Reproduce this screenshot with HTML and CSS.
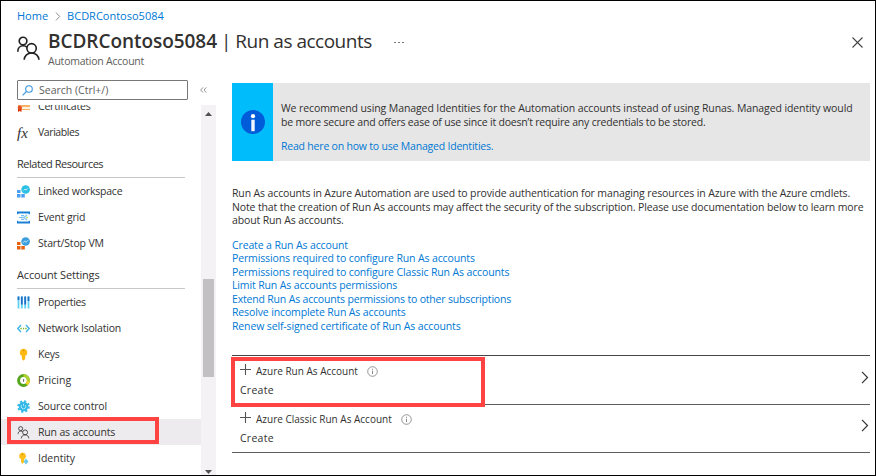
FILE: index.html
```
<!DOCTYPE html>
<html lang="en">
<head>
<meta charset="utf-8">
<title>BCDRContoso5084 | Run as accounts</title>
<link rel="stylesheet" href="styles.css">
</head>
<body>
<svg width="0" height="0" class="defs">
  <symbol id="people" viewBox="0 0 24 26"><g fill="none" stroke="currentColor" stroke-width="1.7"><circle cx="6.3" cy="5.2" r="4"/><path d="M.8 16.5c0-4 2.6-6.4 5.6-6.4 1.700 0 3.200.6 4.200 1.700"/><circle cx="15.200" cy="12.800" r="4.900"/><path d="M7.500 24.800c.2-4.200 3.500-7.100 7.700-7.100s7.500 2.900 7.700 7.100"/></g></symbol>
  <symbol id="chev" viewBox="0 0 8 13"><path d="M1 .8 6.500 6.500 1 12.200" fill="none" stroke="currentColor" stroke-width="1.2"/></symbol>
  <symbol id="plus" viewBox="0 0 11 11"><path d="M5.500 0v11M0 5.500h11" stroke="#555" stroke-width="1.100"/></symbol>
  <symbol id="hint" viewBox="0 0 11 11"><circle cx="5.500" cy="5.500" r="4.800" fill="none" stroke="#8a8a8a" stroke-width=".9"/><path d="M5.500 4.700v3.400M5.500 2.700v1.100" stroke="#8a8a8a"/></symbol>
</svg>
<div class="window">
  <header class="header">
    <nav class="crumbs">
      <a class="home">Home</a>
      <svg class="sep" viewBox="0 0 8 13"><use href="#chev"/></svg>
      <a class="crumb">BCDRContoso5084</a>
    </nav>
    <div class="heading">
      <svg class="logo" viewBox="0 0 24 26"><use href="#people"/></svg>
      <div class="titles">
        <h1 class="title"><b>BCDRContoso5084</b><span>| Run as accounts</span></h1>
        <div class="subtitle">Automation Account</div>
      </div>
      <span class="more"><i></i><i></i><i></i></span>
      <svg class="close" viewBox="0 0 11 11"><path d="M.5.5l10 10M10.500.5l-10 10" stroke="#444" stroke-width="1.100"/></svg>
    </div>
  </header>
  <div class="body">
    <aside class="sidebar">
      <div class="search-row">
        <div class="search">
          <svg viewBox="0 0 11 11"><path d="M.6 10.400 4.300 6.700" stroke="#3a96dd" stroke-width="1.200"/><circle cx="7" cy="4" r="3.300" fill="none" stroke="#3a96dd" stroke-width="1.100"/></svg>
          <span>Search (Ctrl+/)</span>
        </div>
        <svg class="collapse" viewBox="0 0 7 6"><path d="M3 .4.700 3 3 5.600M6.300.4 4 3l2.300 2.600" fill="none" stroke="#777" stroke-width=".8"/></svg>
      </div>
      <div class="menu">
        <div class="list">
          <div class="item"><svg viewBox="0 0 13 13"><path d="M1 3h12v7H4V8H1z" fill="#f7b267"/><path d="M5 7h8v2H5z" fill="#fff3e0"/><path d="M1 7.500h3.500V12L2.700 11 1 12z" fill="#d83b01"/><circle cx="2.700" cy="7.500" r="2" fill="#e8502a"/></svg><span class="t2">Certificates</span></div>
          <div class="item"><span class="fx">fx</span><span class="t4">Variables</span></div>
          <h2 class="group g1">Related Resources</h2>
          <div class="item"><svg viewBox="0 0 13 13"><path d="M0 5h3.500v3H0zM0 9h3.500v3.500H0zM4.300 9h3.500v3.500H4.300z" fill="#4a9ff0"/><circle cx="8.600" cy="4.500" r="4.300" fill="#2bc0e4"/><path d="M6.500 5.500 8 4l1.100 1.200L10.500 3.300" fill="none" stroke="#c4f2fb" stroke-width=".9"/></svg><span class="t2">Linked workspace</span></div>
          <div class="item"><svg viewBox="0 0 13 13"><path d="M0 3V.7h13V3h-1.200V2.200H1.200V3zM0 10v2.300h13V10h-1.200v.8H1.200V10z" fill="#1a7fd4" stroke="#1a7fd4" stroke-width=".4"/><path d="M2 6.500h5M4 4.700h3M4 8.300h3" stroke="#7cbdf0" stroke-width="1.200"/><path d="M10 3.900 6.900 6.500 10 9.100" fill="none" stroke="#8fcdf3" stroke-width="1.500"/><path d="M9.300 6.500h1.500" stroke="#9bd048" stroke-width="1.500"/></svg><span class="t1">Event grid</span></div>
          <div class="item"><svg viewBox="0 0 13 13"><path d="M0 5h3.500v3H0zM0 9h3.500v3.500H0zM4.300 9h3.500v3.500H4.300z" fill="#e8610f"/><circle cx="8.600" cy="4.500" r="4.300" fill="#3c9fdc"/><path d="M6 5.800 7.800 3.800l1.100 1.600L11 3.200" fill="none" stroke="#c9e8fa" stroke-width=".9"/></svg><span class="t1">Start/Stop VM</span></div>
          <h2 class="group g2">Account Settings</h2>
          <div class="item"><svg viewBox="0 0 13 13"><g stroke="#62d0f2" stroke-width="1.800"><path d="M1.500.5v12M4.800.5v12M8.200.5v12M11.500.5v12"/></g><g stroke="#1f6fc9" stroke-width="1.800"><path d="M1.500.5v3.500M4.800.5v8M8.200.5v8M11.500.5v4.500"/></g></svg><span class="t3">Properties</span></div>
          <div class="item"><svg viewBox="0 0 13 13"><path d="M4 3 .8 6.500 4 10M9 3l3.200 3.500L9 10" fill="none" stroke="#43b4e8" stroke-width="1.400"/><path d="M3.400 6.500h1.400M5.900 6.500h1.300M8.300 6.500h1.400" stroke="#78b928" stroke-width="1.400"/></svg><span class="t2">Network Isolation</span></div>
          <div class="item"><svg viewBox="0 0 13 13"><path d="M6.500.8a3.700 3.700 0 0 1 1.700 7v3.300l-1.700 1.600-1.600-1.600V7.800a3.700 3.700 0 0 1 1.600-7z" fill="#fdb913"/><circle cx="6.500" cy="2.600" r=".7" fill="#c98a00"/></svg><span class="t3">Keys</span></div>
          <div class="item"><svg viewBox="0 0 13 13"><circle cx="6.500" cy="6.500" r="4.900" fill="none" stroke="#54a51c" stroke-width="3"/><path d="M6.500 1.600a4.900 4.900 0 0 1 4.900 4.900" fill="none" stroke="#b0d22e" stroke-width="3"/><path d="M11.400 6.500a4.900 4.900 0 0 1-2 3.900" fill="none" stroke="#f5d328" stroke-width="3"/><path d="M6.500 5v3M6 6h1.300" stroke="#666" stroke-width=".8"/></svg><span>Pricing</span></div>
          <div class="item"><svg viewBox="0 0 13 13"><circle cx="6.500" cy="6.500" r="5.400" fill="none" stroke="#35b8e6" stroke-width="1.800" stroke-dasharray="2.120 2.121"/><circle cx="6.500" cy="6.500" r="4.800" fill="#35b8e6"/><path d="M4.600 5.200a2.300 2.300 0 1 0 3.800 0M6.500 3.800v2" fill="none" stroke="#b5ecfb" stroke-width=".9"/></svg><span class="t1">Source control</span></div>
          <div class="item selected"><svg viewBox="0 0 24 26"><use href="#people"/></svg><span class="t1">Run as accounts</span></div>
          <div class="item"><svg viewBox="0 0 13 13"><path d="M5.500.5a3.500 3.500 0 0 1 1.600 6.600V10L5.500 12 4 10V7.100A3.500 3.500 0 0 1 5.500.5z" fill="#fdbf1c"/><circle cx="5.500" cy="2.500" r=".7" fill="#c98a00"/><path d="m9 6.500 2.500 3L9 12.500l-2.500-3z" fill="#6fcbee"/></svg><span>Identity</span></div>
        </div>
        <div class="scrollbar">
          <svg viewBox="0 0 7 4"><path d="M3.500 0 7 4H0z" fill="#505050"/></svg>
          <div class="thumb"></div>
          <svg viewBox="0 0 7 4"><path d="M3.500 4 7 0H0z" fill="#505050"/></svg>
        </div>
      </div>
    </aside>
    <main class="content">
      <section class="banner">
        <div class="banner-icon"><svg viewBox="0 0 24 24"><circle cx="12" cy="12" r="12" fill="#015cda"/><circle cx="12" cy="6.200" r="2.100" fill="#fff"/><path d="M10.300 9.700h3.400v11.500h-3.400z" fill="#f2f6ff"/></svg></div>
        <div class="banner-text">
          <p><span class="n1">We recommend using Managed Identities for the Automation accounts instead of using Runas. Managed identity would</span><br><span class="n2">be more secure and offers ease of use since it doesn’t require any credentials to be stored.</span></p>
          <a class="n2">Read here on how to use Managed Identities.</a>
        </div>
      </section>
      <p class="intro">Run As accounts in Azure Automation are used to provide authentication for managing resources in Azure with the Azure cmdlets.<br>Note that the creation of Run As accounts may affect the security of the subscription. Please use documentation below to learn more<br>about Run As accounts.</p>
      <nav class="links">
        <a>Create a Run As account</a>
        <a>Permissions required to configure Run As accounts</a>
        <a>Permissions required to configure Classic Run As accounts</a>
        <a>Limit Run As accounts permissions</a>
        <a class="n3">Extend Run As accounts permissions to other subscriptions</a>
        <a>Resolve incomplete Run As accounts</a>
        <a>Renew self-signed certificate of Run As accounts</a>
      </nav>
      <div class="accounts">
        <div class="account">
          <div>
            <div class="name"><svg class="plus" viewBox="0 0 11 11"><use href="#plus"/></svg><span>Azure Run As Account</span><svg class="hint" viewBox="0 0 11 11"><use href="#hint"/></svg></div>
            <div class="create">Create</div>
          </div>
          <svg class="go" viewBox="0 0 8 13"><use href="#chev"/></svg>
        </div>
        <div class="account">
          <div>
            <div class="name"><svg class="plus" viewBox="0 0 11 11"><use href="#plus"/></svg><span>Azure Classic Run As Account</span><svg class="hint" viewBox="0 0 11 11"><use href="#hint"/></svg></div>
            <div class="create">Create</div>
          </div>
          <svg class="go" viewBox="0 0 8 13"><use href="#chev"/></svg>
        </div>
      </div>
    </main>
  </div>
  <div class="callout callout-menu"></div>
  <div class="callout callout-account"></div>
</div>
</body>
</html>
```
FILE: styles.css
```
* { box-sizing: border-box; }
body { margin: 0; font: 10.5px/13.5px "Open Sans", "Noto Sans", sans-serif; color: #323130; }
svg { display: block; flex: none; }
p, h1, h2 { margin: 0; }
a { color: #0078d4; }
.defs { position: absolute; }
.window { position: relative; width: 876px; height: 476px; border: 1px solid #000; background: #fff; overflow: hidden; display: flex; flex-direction: column; }

.header { height: 79px; padding: 7px 12px 0 16px; flex: none; }
.crumbs { display: flex; align-items: center; height: 16px; font-size: 11px; }
.sep { width: 6px; height: 9px; margin: 0 6px 0 7px; color: #777; }
.heading { display: flex; position: relative; }
.logo { width: 23px; height: 25px; margin: 12px 8px 0 0; color: #222; }
.title { display: flex; gap: 4px; height: 30px; padding-top: 3px; font-size: 19px; line-height: 28px; font-weight: 400; letter-spacing: -0.5px; white-space: nowrap; }
.title b { font-size: 19px; font-weight: 600; letter-spacing: -0.05px; }
.subtitle { line-height: 14px; letter-spacing: -0.23px; color: #605e5c; }
.more { display: flex; gap: 2px; margin: 18px 0 0 22px; }
.more i { width: 2px; height: 1px; background: #777; }
.close { width: 11px; height: 11px; margin: 13px 0 0 auto; }

.body { flex: 1; min-height: 0; display: flex; }
.sidebar { width: 215px; flex: none; display: flex; flex-direction: column; }
.search-row { display: flex; align-items: center; flex: none; height: 20px; padding-left: 16px; }
.search { width: 171px; height: 20px; display: flex; align-items: center; gap: 6px; padding: 1px 0 0 4px; border: 1px solid #7a7876; border-radius: 1px; color: #605e5c; }
.search svg { width: 11px; height: 11px; margin-top: -1px; }
.collapse { width: 7px; height: 6px; margin-left: 12px; }
.menu { flex: 1; min-height: 0; display: flex; margin-top: 5px; }
.list { width: 200px; overflow: hidden; }
.list > :first-child { margin-top: -12px; }
.item { height: 26px; display: flex; align-items: center; gap: 8px; padding-left: 16px; white-space: nowrap; }
.item span { padding-top: 2px; }
.item svg { width: 13px; height: 13px; }
.selected { background: #edebee; }
.fx { width: 13px; font: italic 15px/14px "Liberation Serif", serif; }
.t1 { letter-spacing: -0.16px; }
.t2 { letter-spacing: -0.2px; }
.t3 { letter-spacing: -0.3px; }
.t4 { letter-spacing: -0.42px; }
.group { margin: 0 16px 0 16px; font-size: 11px; font-weight: 400; line-height: 14px; border-bottom: 1px solid #c8c6c8; }
.g1 { height: 33px; padding-top: 12px; letter-spacing: -0.48px; }
.g2 { height: 33px; padding-top: 12px; letter-spacing: -0.17px; }
.scrollbar { width: 15px; background: #f5f2f6; display: flex; flex-direction: column; align-items: center; padding: 7px 0 1px; }
.scrollbar svg { width: 7px; height: 4px; }
.thumb { width: 11px; height: 98px; margin: 163px 0 auto; background: #c3c0c4; }

.content { flex: 1; min-width: 0; padding: 3px 5px 0 16px; letter-spacing: -0.13px; white-space: nowrap; }
.banner { display: flex; height: 78px; background: #e6e6e6; }
.banner-icon { width: 41px; display: flex; align-items: center; justify-content: center; background: #00bcfa; }
.banner-icon svg { width: 24px; height: 24px; }
.banner-text { padding: 19px 0 0 8px; }
.banner-text a { display: block; margin-top: 11px; }
.n1 { letter-spacing: -0.1px; }
.n2 { letter-spacing: -0.2px; }
.n3 { letter-spacing: -0.18px; }
.intro { margin-top: 26px; }
.links { display: flex; flex-direction: column; margin-top: 11px; }
.accounts { margin-top: 22px; border-top: 1px solid #484644; }
.account { display: flex; justify-content: space-between; height: 49px; padding: 8px 1px 0 8px; border-bottom: 1px solid #605e5c; }
.name { display: flex; align-items: flex-start; font-size: 10px; letter-spacing: 0; height: 18px; }
.plus { width: 11px; height: 11px; margin-right: 5px; }
.hint { width: 11px; height: 11px; margin: 2px 0 0 9px; }
.name span { line-height: 14px; }
.create { line-height: 17px; letter-spacing: 0.25px; }
.go { width: 8px; height: 13px; margin-top: 7px; }
.account + .account { height: 48px; padding-top: 7px; }

.callout { position: absolute; border: 4px solid #ff4343; }
.callout-menu { left: 6px; top: 416px; width: 152px; height: 27px; }
.callout-account { left: 230px; top: 356px; width: 254px; height: 50px; }
```
